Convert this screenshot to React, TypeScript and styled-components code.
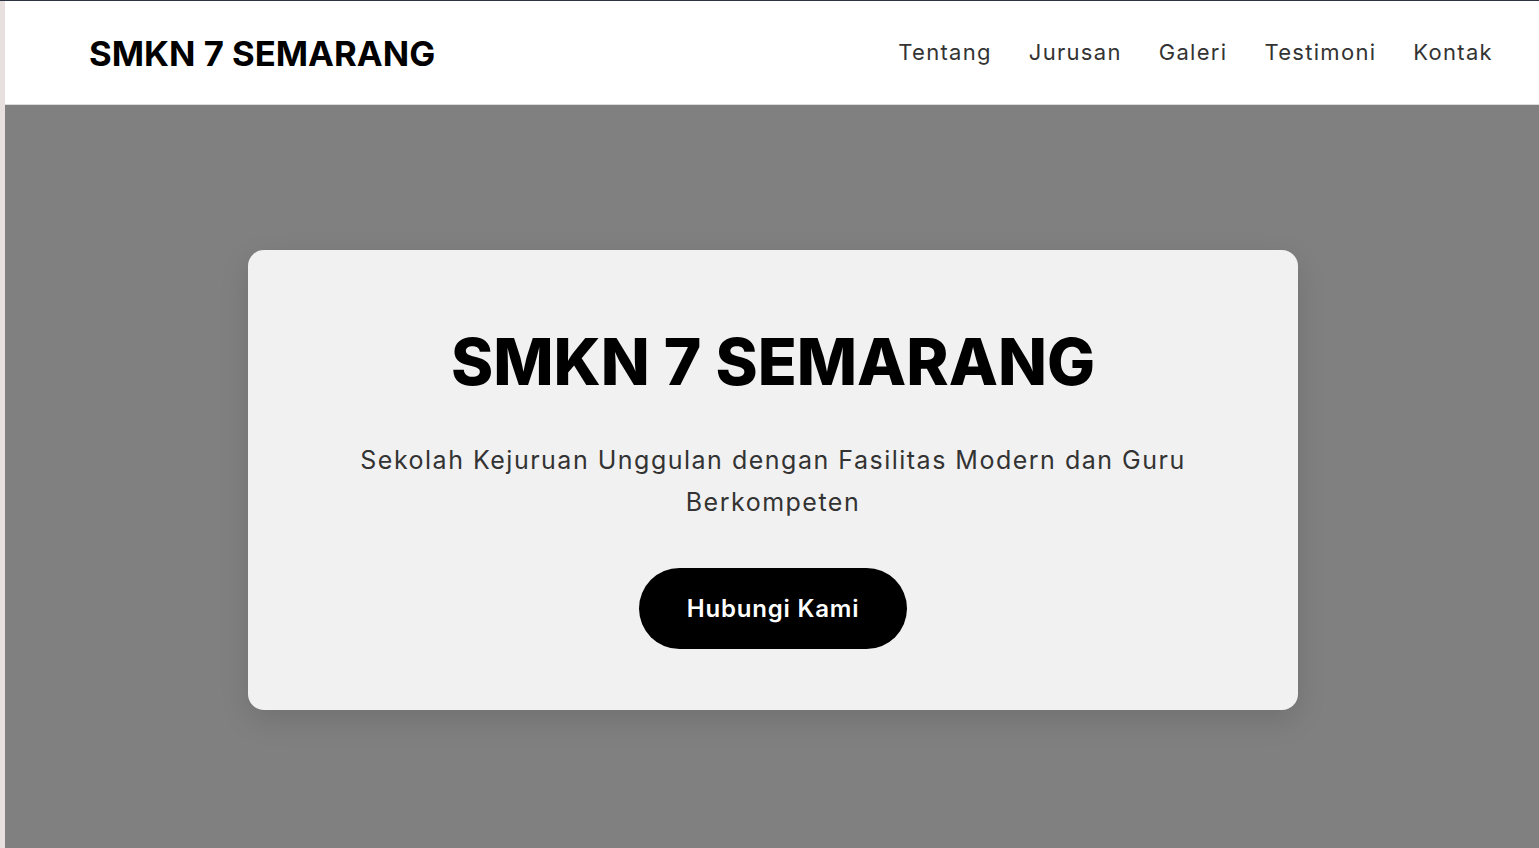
import React from "react";
import styled, { createGlobalStyle } from "styled-components";

const GlobalStyle = createGlobalStyle`
  html, body {
    margin: 0;
    padding: 0;
    height: 100%;
    overflow: hidden;
  }
  body {
    font-family: Inter, "Noto Sans", Arial, sans-serif;
    background: #2b3440;
  }
  #root {
    height: 100%;
  }
  * {
    box-sizing: border-box;
  }
`;

const Page = styled.div`
  display: flex;
  height: 100vh;
  padding-top: 1px;
`;

const SideStrip = styled.div`
  width: 5px;
  flex-shrink: 0;
  background-color: #e8dfdf;
`;

const Main = styled.div`
  flex: 1;
  display: flex;
  flex-direction: column;
  min-width: 0;
`;

const Header = styled.header`
  display: flex;
  align-items: center;
  justify-content: space-between;
  height: 104px;
  padding: 0 46px 0 84px;
  background-color: #ffffff;
  border-bottom: 1px solid #dcdcdc;
`;

const Logo = styled.h1`
  margin: 0;
  font-size: 34.7px;
  font-weight: 700;
  color: #000000;
`;

const Nav = styled.ul`
  display: flex;
  gap: 37px;
  margin: 0 0 2px;
  padding: 0;
  list-style-type: none;
`;

const NavItem = styled.li`
  font-size: 22px;
  letter-spacing: 1.3px;
  color: #333333;
  cursor: pointer;
`;

const Hero = styled.section`
  flex: 1;
  display: flex;
  justify-content: center;
  align-items: flex-start;
  padding: 145px 0 0 2px;
  background-color: #808080;
`;

const Card = styled.div`
  display: flex;
  flex-direction: column;
  align-items: center;
  width: 1050px;
  height: 460px;
  padding-top: 72px;
  background-color: #f1f1f1;
  border-radius: 16px;
  box-shadow: 0 10px 30px rgba(0, 0, 0, 0.12);
  text-align: center;
`;

const Title = styled.h2`
  margin: 0;
  font-size: 64px;
  line-height: 80px;
  font-weight: 800;
  color: #000000;
`;

const Subtitle = styled.p`
  margin: 37px 0 0;
  max-width: 900px;
  font-size: 25px;
  line-height: 42px;
  letter-spacing: 1.5px;
  color: #333333;
`;

const Button = styled.button`
  margin-top: 45px;
  height: 81px;
  padding: 0 48px;
  border: none;
  border-radius: 41px;
  background-color: #000000;
  color: #ffffff;
  font-family: inherit;
  font-size: 24px;
  font-weight: 600;
  letter-spacing: 0.8px;
  cursor: pointer;
`;

const links = ["Tentang", "Jurusan", "Galeri", "Testimoni", "Kontak"];

const App = () => {
  return (
    <>
      <GlobalStyle />
      <Page>
        <SideStrip />
        <Main>
          <Header>
            <Logo>SMKN 7 SEMARANG</Logo>
            <Nav>
              {links.map((link) => (
                <NavItem key={link}>{link}</NavItem>
              ))}
            </Nav>
          </Header>
          <Hero>
            <Card>
              <Title>SMKN 7 SEMARANG</Title>
              <Subtitle>
                Sekolah Kejuruan Unggulan dengan Fasilitas Modern dan Guru
                Berkompeten
              </Subtitle>
              <Button>Hubungi Kami</Button>
            </Card>
          </Hero>
        </Main>
      </Page>
    </>
  );
};

export default App;
